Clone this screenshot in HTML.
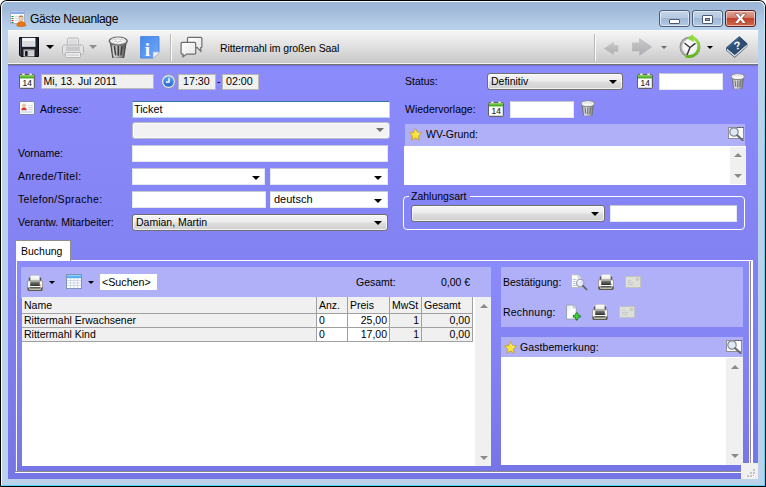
<!DOCTYPE html>
<html lang="de">
<head>
<meta charset="utf-8">
<title>Gäste Neuanlage</title>
<style>
html,body{margin:0;padding:0;background:#fff;}
body{width:766px;height:487px;position:relative;overflow:hidden;font-family:"Liberation Sans",sans-serif;font-size:10.5px;color:#000;}
.abs,.abs *{position:absolute;box-sizing:border-box;}
#win{left:0;top:0;width:766px;height:487px;border-radius:7px 7px 1px 1px;background:#000;}
#frame{left:1px;top:1px;width:764px;height:485px;border-radius:6px 6px 0 0;background:linear-gradient(#9ab6d6 0px,#9fbad9 8px,#b4cbe6 22px,#b9d2ec 29px,#bcd2ea 30px,#bcd2ea 100%);box-shadow:inset 0 0 0 1px rgba(255,255,255,.92);}
#cyanb{left:1px;top:485px;width:764px;height:1px;background:#4fd6f6;}
#title{left:30px;top:12px;font-size:12px;letter-spacing:-.36px;line-height:15px;white-space:nowrap;}
.cb{top:10px;height:17px;border:1px solid #4d5f78;border-radius:3px;box-shadow:inset 0 0 0 1px rgba(255,255,255,.55);}
#tb{left:8px;top:30px;width:750px;height:35px;background:linear-gradient(#ffffff 0px,#f6f6f6 1px,#f2f2f2 4px,#cacaca 32px,#cacaca 33px,#f2f2f2 33px,#f2f2f2 34px,#73736e 34px);}
#form{left:8px;top:65px;width:750px;height:414px;background:linear-gradient(#7474dc 0px,#7474dc 1px,#8484f2 1px,#8484f2 2px,#8b8bfc 2px,#8787f7 90px,#8383f3 175px,#7d7ded 290px,#7575e5 414px);}
.lbl{white-space:nowrap;line-height:13px;height:13px;}
.inp{background:#fff;border:1px solid #e3e9ef;border-top-color:#c4c8d4;border-radius:1px;}
.ro{background:#f0f0f0;border:1px solid #b8b8b8;white-space:nowrap;line-height:12px;padding-left:2px;}
.cmb{border:1px solid #707070;border-radius:3px;background:linear-gradient(#f4f4f4 0%,#ececec 48%,#dddddd 52%,#d0d0d0 100%);box-shadow:inset 0 0 0 1px rgba(255,255,255,.7);white-space:nowrap;line-height:14px;padding-left:3px;}
.cmbw{background:#fff;border:1px solid #e3e9ef;border-top-color:#c4c8d4;border-radius:1px;white-space:nowrap;line-height:14px;padding-left:3px;}
.arr{width:0;height:0;border-left:4px solid transparent;border-right:4px solid transparent;border-top:4px solid #000;}
.arrs{width:0;height:0;border-left:3px solid transparent;border-right:3px solid transparent;border-top:3px solid #000;}
.lp{background:#b0b0f8;}
.sb{background:#f0f0f0;}
.up{width:0;height:0;border-left:4px solid transparent;border-right:4px solid transparent;border-bottom:4px solid #8a8a8a;}
.dn{width:0;height:0;border-left:4px solid transparent;border-right:4px solid transparent;border-top:4px solid #8a8a8a;}
.cell{border-right:1px solid #a0a0a0;border-bottom:1px solid #a0a0a0;background:#f0f0f0;white-space:nowrap;line-height:13px;padding-left:2px;overflow:hidden;}
.cell.w{background:#fff;}
.cell.r{text-align:right;padding-right:2px;padding-left:0;}
</style>
</head>
<body>
<div class="abs" id="win">
 <div id="frame"></div>
 <div id="cyanb"></div>
 <div style="left:764px;top:6px;width:1px;height:480px;background:linear-gradient(#c8eefa,#50d8f8 30%);"></div>
 <svg style="left:10px;top:10px" width="17" height="17" viewBox="0 0 17 17"><rect x=".5" y=".5" width="14" height="13" fill="#fbfbfd" stroke="#9aa6c8" stroke-width=".8"/><rect x=".9" y=".9" width="13.200" height="3" fill="#7ea4e6"/><rect x=".9" y=".9" width="13.200" height="1.200" fill="#b4ccf2"/><path d="M1.500 6.500h2M1.500 8.500h2M1.500 12.400h2" stroke="#1f8a2a" stroke-width="1.100"/><path d="M1.500 10.500h2" stroke="#e02020" stroke-width="1.100"/><path d="M5 6.500h5M5 8.500h5M5 10.500h4" stroke="#d4d4dc" stroke-width=".9"/><ellipse cx="11.200" cy="8.300" rx="2.100" ry="2.600" fill="#f3d2b0" stroke="#b98a62" stroke-width=".5"/><path d="M9.300 7.200c.3-1.800 3.500-1.800 3.800 0-.9-.8-2.900-.8-3.800 0z" fill="#8a5a2a"/><path d="M6.800 15.800c0-3.400 2.200-4.200 4.400-4.200s4.600.8 4.600 4.200c-1.500 1-7.500 1-9 0z" fill="#e8750e" stroke="#c25a06" stroke-width=".5"/></svg>
 <div id="title">Gäste Neuanlage</div>
 <!-- caption buttons -->
 <div class="cb" style="left:659px;width:31px;background:linear-gradient(#c3d4e8 0%,#b5c9e1 45%,#9fb8d6 50%,#b3c9e2 100%);"><div style="left:9px;top:7.5px;width:11px;height:5px;background:#fff;border:1px solid #4a5a70;border-radius:1px;"></div></div>
 <div class="cb" style="left:692px;width:31px;background:linear-gradient(#c3d4e8 0%,#b5c9e1 45%,#9fb8d6 50%,#b3c9e2 100%);"><div style="left:9px;top:3.5px;width:11px;height:9px;border:1px solid #4a5a70;background:#fff;border-radius:1px;"><div style="left:2px;top:2px;width:5px;height:3px;background:#8da3c0;border:1px solid #4a5a70;"></div></div></div>
 <div class="cb" style="left:725px;width:31px;border-color:#5a2020;background:linear-gradient(#e0a89c 0%,#d07a6a 45%,#c0432e 50%,#cf6a4a 100%);"><svg style="left:6.500px;top:1px" width="16" height="14" viewBox="0 0 16 14"><text x="7.400" y="11" text-anchor="middle" font-family="Liberation Sans,sans-serif" font-weight="bold" font-size="16" fill="#fff" stroke="#4a2020" stroke-width=".7" paint-order="stroke" transform="translate(7.400 0) scale(1.22 1) translate(-7.400 0)">x</text></svg></div>


 <div id="tb">
  <!-- save (floppy) -->
  <svg style="left:11px;top:7px" width="20" height="20" viewBox="0 0 20 20"><path d="M.5.5h19v19H2L.5 18z" fill="#1f1f28" stroke="#0a0a10" stroke-width="1"/><path d="M1.5 1.5v16" stroke="#4a4a58" stroke-width="1"/><rect x="3" y=".8" width="13.5" height="9" fill="#c8dcf4"/><rect x="3.7" y="1" width="12.1" height="8.1" fill="#ffffff"/><rect x="3.7" y="4" width="12.1" height="5.1" fill="#dcdcde"/><rect x="3.7" y="1" width="12.1" height="3" fill="#f4f5f8"/><rect x="4.5" y="12.5" width="11" height="7" fill="#c4c6ca"/><rect x="4.5" y="12.5" width="11" height="1" fill="#8a8c92"/><rect x="6" y="14" width="2.6" height="5" rx=".8" fill="#17171e"/><rect x="9.8" y="14" width="5" height="5" fill="#dddfe2"/><path d="M10 15.5h4.500M10 17h4.5" stroke="#b0b2b8" stroke-width=".6"/></svg>
  <div class="arr" style="left:37.500px;top:15px;"></div>
  <!-- printer disabled -->
  <svg style="left:54px;top:7px" width="22" height="21" viewBox="0 0 22 21"><path d="M5.5 8V2.2c0-.7.5-1.2 1.2-1.2h8.6c.7 0 1.2.5 1.2 1.2V8" fill="#ececee" stroke="#b7b7bb"/><rect x="7" y="2.5" width="8" height="5.5" fill="#dcdcdf"/><path d="M2.5 8h17c1 0 2 1 2 2v6.5c0 .6-.5 1-1 1h-19c-.5 0-1-.4-1-1V10c0-1 1-2 2-2z" fill="#e3e3e6" stroke="#b4b4b8"/><rect x="4" y="9.5" width="14" height="4.5" fill="#c9c9cd"/><path d="M3.5 15.5h15v4c0 .5-.5 1-1 1h-13c-.5 0-1-.5-1-1z" fill="#f0f0f2" stroke="#b4b4b8"/><rect x="5" y="17.5" width="12" height="1" fill="#c4c4c8"/></svg>
  <div class="arr" style="left:81px;top:15px;border-top-color:#8e8e92;"></div>
  <!-- trash -->
  <svg style="left:99.500px;top:5.5px" width="20.500" height="22.500" viewBox="0 0 20 22" preserveAspectRatio="none"><defs><linearGradient id="tg" x1="0" x2="1"><stop offset="0" stop-color="#5a5a5a"/><stop offset=".28" stop-color="#d4d4d4"/><stop offset=".55" stop-color="#a8a8a8"/><stop offset="1" stop-color="#4c4c4c"/></linearGradient></defs><path d="M2.300 6l2.200 14.500c.2.800 1 1.200 1.500 1.200h8c.5 0 1.300-.4 1.500-1.200L17.700 6z" fill="url(#tg)" stroke="#444" stroke-width="1"/><ellipse cx="10" cy="5" rx="8.800" ry="3.900" fill="#dcdcdc" stroke="#6a6a6a" stroke-width="1.400"/><ellipse cx="10" cy="4.300" rx="7" ry="2.900" fill="#fbfbfb"/><path d="M4 4.500l2.200-1.800 1.600 1.400 2.200-2 2 1.700 1.600-1.100 2.200 1.900M5.500 6l2-1 2 1.200 2.500-1.400 2 1.200" stroke="#b4b4b4" stroke-width=".8" fill="none"/><path d="M6.300 9.800l1.100 9M10 9.800v9.400M13.700 9.800l-1.100 9" stroke="#3e3e3e" stroke-width="1.500" fill="none"/><path d="M4.600 9.500l1.200 9.500" stroke="#f0f0f0" stroke-width=".8" fill="none" opacity=".8"/></svg>
  <!-- info -->
  <svg style="left:132px;top:5.5px" width="20" height="23" viewBox="0 0 20 23"><defs><linearGradient id="ig" x1="0" y1="0" x2="1" y2="1"><stop offset="0" stop-color="#4488ee"/><stop offset="1" stop-color="#72aaf8"/></linearGradient></defs><path d="M.6.600h18.400v15.600l-5.600 5.800H.6z" fill="url(#ig)" stroke="#3c7ce0" stroke-width=".8"/><path d="M19 16.200h-5.600V22z" fill="#f6f6f6"/><path d="M13.400 22v-5.800H19" fill="none" stroke="#cfd6e4" stroke-width=".7"/><text x="7.400" y="19.700" text-anchor="middle" font-family="Liberation Serif,serif" font-weight="bold" font-size="19" fill="#fff">i</text></svg>
  <div style="left:162px;top:4px;width:1px;height:27px;background:#b9b9b9;"></div><div style="left:163px;top:4px;width:1px;height:27px;background:#fbfbfb;"></div>
  <!-- chat -->
  <svg style="left:172px;top:5px" width="24" height="24" viewBox="0 0 24 24"><defs><linearGradient id="chg" x1="0" y1="0" x2="1" y2="1"><stop offset="0" stop-color="#ffffff"/><stop offset="1" stop-color="#e4e4e4"/></linearGradient></defs><path d="M8.600 2.400h12.200c.6 0 1.100.5 1.100 1.100v8c0 .6-.5 1.100-1.100 1.100V16.200l-3.500-3.600H8.600c-.6 0-1.100-.5-1.100-1.100v-8c0-.6.500-1.100 1.100-1.100z" fill="url(#chg)" stroke="#6c6c6c" stroke-width="1.200"/><path d="M2.200 7.400h12.400c.6 0 1.100.5 1.100 1.100V18c0 .6-.5 1.100-1.100 1.100H6.700L3 21.800v-2.700h-.8c-.6 0-1.100-.5-1.100-1.100V8.500c0-.6.500-1.100 1.100-1.100z" fill="url(#chg)" stroke="#6c6c6c" stroke-width="1.200"/></svg>
  <div class="lbl" style="left:212px;top:11.500px;font-size:10.5px;letter-spacing:-.11px;">Rittermahl im großen Saal</div>
  <!-- right side -->
  <div style="left:586px;top:4px;width:1px;height:27px;background:#b9b9b9;"></div><div style="left:587px;top:4px;width:1px;height:27px;background:#fbfbfb;"></div>
  <svg style="left:596px;top:11.500px" width="15" height="13" viewBox="0 0 15 13"><defs><linearGradient id="ag" x1="0" y1="0" x2="0" y2="1"><stop offset="0" stop-color="#c8c8ca"/><stop offset="1" stop-color="#aeaeb2"/></linearGradient></defs><path d="M9.500.6v3h4.400v5.800H9.500v3L.4 6.500z" fill="url(#ag)" stroke="#b4b4b8" stroke-width=".5"/></svg>
  <svg style="left:624px;top:7.5px" width="20" height="18" viewBox="0 0 20 18"><path d="M7.500.5v4.400H.3v8.200h7.200v4.400l12.200-8.500z" fill="url(#ag)" stroke="#b4b4b8" stroke-width=".5"/></svg>
  <div class="arrs" style="left:652.700px;top:16px;border-top-color:#6e6e72;"></div>
  <!-- clock -->
  <svg style="left:670px;top:4px" width="25" height="25" viewBox="0 0 25 25"><defs><radialGradient id="cg" cx=".45" cy=".4" r=".7"><stop offset="0" stop-color="#ffffff"/><stop offset=".75" stop-color="#f0eef4"/><stop offset="1" stop-color="#c8c8cc"/></radialGradient><linearGradient id="gg" x1="0" y1="0" x2="0" y2="1"><stop offset="0" stop-color="#9be04a"/><stop offset="1" stop-color="#5cb818"/></linearGradient></defs><circle cx="12" cy="13" r="10.5" fill="#8e8e8e"/><circle cx="12" cy="13" r="9.5" fill="#b4b4b4"/><circle cx="12.5" cy="13" r="8.3" fill="url(#cg)"/><path d="M12 13.500L7 9.5M12 13.5l5-3.800M12 13.5l-2.800 7" stroke="#3a3a3a" stroke-width="1.5" fill="none" stroke-linecap="round"/><path d="M14.6 3.4A10 10 0 0 1 8.6 22.400" fill="none" stroke="url(#gg)" stroke-width="2.8" stroke-linecap="round"/><path d="M9 4.600L15 .2l.8 7.800z" fill="#8fd840"/></svg>
  <div class="arrs" style="left:699px;top:16px;"></div>
  <!-- book -->
  <svg style="left:717px;top:6px" width="23" height="22" viewBox="0 0 23 22"><path d="M1.300 11.400L14.300.3 22.300 7.5v3L9.800 21.800 1.300 14.600z" fill="#1b3550"/><path d="M2 12.500l7.800 6.600L21.800 8.600v2L9.800 21 2 14.500z" fill="#eef2f6"/><path d="M2.300 13.700l7.500 6.300L21.600 9.700" stroke="#8fa2b6" stroke-width=".5" fill="none"/><path d="M1.600 11.600L14.300.8 22 7.600 9.800 18.300z" fill="#2d4f73"/><path d="M1.600 11.600L14.300.8l1.200 1L3 12.800z" fill="#3d6188"/><text x="9" y="13.5" font-family="Liberation Sans,sans-serif" font-weight="bold" font-size="11" fill="#fff" transform="rotate(-14 12 10)">?</text></svg>
 </div>
 <div id="form"></div>

 <div id="ctl" style="left:0;top:0;width:766px;height:487px;">
  <!-- row 1 -->
  <svg style="left:19px;top:73px" width="16" height="16" viewBox="0 0 16 16"><rect x=".5" y="1.5" width="15" height="14" rx="1.5" fill="#fff" stroke="#606068"/><path d="M1 2.5a.5.5 0 0 1 .5-.5h13a.5.5 0 0 1 .5.5V5.5H1z" fill="#4fae2c"/><path d="M1 2.5a.5.5 0 0 1 .5-.5h13a.5.5 0 0 1 .5.5V3.5H1z" fill="#86d455"/><rect x="3" y=".3" width="2.8" height="2.2" rx=".5" fill="#f4f4f4" stroke="#7a9a6a" stroke-width=".5"/><rect x="10.2" y=".3" width="2.8" height="2.2" rx=".5" fill="#f4f4f4" stroke="#7a9a6a" stroke-width=".5"/><path d="M14.5 6v8.5H2" stroke="#d8d8d8" stroke-width="1" fill="none"/><text x="8.2" y="13.4" text-anchor="middle" font-family="Liberation Sans,sans-serif" font-size="8.3" fill="#222" stroke="#222" stroke-width=".12">14</text></svg>
  <div class="ro" style="left:41px;top:73.500px;width:113px;height:15px;line-height:12.500px;padding-left:1.500px;">Mi, 13. Jul 2011</div>
  <svg style="left:161px;top:73.5px" width="15" height="15" viewBox="0 0 15 15"><defs><linearGradient id="bl" x1="0" y1="0" x2="0" y2="1"><stop offset="0" stop-color="#62a8f4"/><stop offset="1" stop-color="#2664cc"/></linearGradient></defs><circle cx="7.5" cy="7.5" r="6.9" fill="#eef0f6" stroke="#8a8c9c" stroke-width=".9"/><circle cx="7.5" cy="7.5" r="5.300" fill="url(#bl)"/><path d="M8 3.800V8H5" stroke="#fff" stroke-width="1.400" fill="none"/></svg>
  <div class="ro" style="left:178px;top:73.5px;width:38px;height:16.5px;line-height:12.500px;padding-left:4px;font-size:10.7px;">17:30</div>
  <div class="lbl" style="left:217px;top:75px;">-</div>
  <div class="ro" style="left:222px;top:73.5px;width:37px;height:16.5px;line-height:12.500px;padding-left:3px;font-size:10.7px;">02:00</div>
  <div class="lbl" style="left:405px;top:75px;">Status:</div>
  <div class="cmb" style="left:487px;top:73px;width:136px;height:17px;">Definitiv</div><div class="arr" style="left:609px;top:80px;"></div>
  <svg style="left:637px;top:73px" width="16" height="16" viewBox="0 0 16 16"><rect x=".5" y="1.5" width="15" height="14" rx="1.5" fill="#fff" stroke="#606068"/><path d="M1 2.5a.5.5 0 0 1 .5-.5h13a.5.5 0 0 1 .5.5V5.5H1z" fill="#4fae2c"/><path d="M1 2.5a.5.5 0 0 1 .5-.5h13a.5.5 0 0 1 .5.5V3.5H1z" fill="#86d455"/><rect x="3" y=".3" width="2.8" height="2.2" rx=".5" fill="#f4f4f4" stroke="#7a9a6a" stroke-width=".5"/><rect x="10.2" y=".3" width="2.8" height="2.2" rx=".5" fill="#f4f4f4" stroke="#7a9a6a" stroke-width=".5"/><path d="M14.5 6v8.5H2" stroke="#d8d8d8" stroke-width="1" fill="none"/><text x="8.2" y="13.4" text-anchor="middle" font-family="Liberation Sans,sans-serif" font-size="8.3" fill="#222" stroke="#222" stroke-width=".12">14</text></svg>
  <div class="inp" style="left:659px;top:73px;width:64px;height:17px;"></div>
  <svg style="left:730px;top:72.5px" width="15.500" height="16.500" viewBox="0 0 20 22" preserveAspectRatio="none"><defs><linearGradient id="tg2" x1="0" x2="1"><stop offset="0" stop-color="#8a8a8a"/><stop offset=".3" stop-color="#e4e4e4"/><stop offset=".6" stop-color="#bcbcbc"/><stop offset="1" stop-color="#787878"/></linearGradient></defs><path d="M2.5 6l2 14.5c.2.800 1 1 1.500 1h8c.5 0 1.300-.2 1.500-1l2-14.500z" fill="url(#tg2)" stroke="#6a6a6a" stroke-width="1"/><ellipse cx="10" cy="5" rx="8.6" ry="3.800" fill="#ececec" stroke="#8a8a8a" stroke-width="1.300"/><ellipse cx="10" cy="4.400" rx="6.800" ry="2.600" fill="#fcfcfc"/><path d="M4.500 4.800l2-1.600 1.600 1.400 2-1.800 2 1.600 1.600-1 1.800 1.600" stroke="#bdbdbd" stroke-width=".9" fill="none"/><path d="M6.500 10l1 8.500M10 10v9M13.500 10l-1 8.500" stroke="#6e6e6e" stroke-width="1.300" fill="none"/></svg>
  <!-- row 2 -->
  <svg style="left:19px;top:101px" width="16" height="14" viewBox="0 0 16 14"><rect x=".5" y=".5" width="15" height="13" rx="1.500" fill="#fbfbfd" stroke="#7e86a8"/><circle cx="5" cy="4.600" r="1.700" fill="#f1c7a0" stroke="#d49a6a" stroke-width=".4"/><path d="M2.300 9.300c0-2 1.200-2.700 2.700-2.700s2.700.7 2.700 2.700z" fill="#e03434"/><path d="M9.500 4.500h1M11.500 4.500h2M9.500 6.500h4M9.500 8.500h4" stroke="#b8bcc8" stroke-width=".7"/><path d="M2.500 11h11" stroke="#9ec0ea" stroke-width=".9"/></svg>
  <div class="lbl" style="left:40px;top:103px;">Adresse:</div>
  <div class="inp" style="left:132px;top:101px;width:258px;height:17px;line-height:14px;padding-left:1px;font-size:10.8px;border-color:#b5d9ea;border-top-color:#3572a2;border-left-color:#8fb8d4;">Ticket</div>
  <div class="lbl" style="left:405px;top:103px;">Wiedervorlage:</div>
  <svg style="left:488px;top:101px" width="16" height="16" viewBox="0 0 16 16"><rect x=".5" y="1.5" width="15" height="14" rx="1.5" fill="#fff" stroke="#606068"/><path d="M1 2.5a.5.5 0 0 1 .5-.5h13a.5.5 0 0 1 .5.5V5.5H1z" fill="#4fae2c"/><path d="M1 2.5a.5.5 0 0 1 .5-.5h13a.5.5 0 0 1 .5.5V3.5H1z" fill="#86d455"/><rect x="3" y=".3" width="2.8" height="2.2" rx=".5" fill="#f4f4f4" stroke="#7a9a6a" stroke-width=".5"/><rect x="10.2" y=".3" width="2.8" height="2.2" rx=".5" fill="#f4f4f4" stroke="#7a9a6a" stroke-width=".5"/><path d="M14.5 6v8.5H2" stroke="#d8d8d8" stroke-width="1" fill="none"/><text x="8.2" y="13.4" text-anchor="middle" font-family="Liberation Sans,sans-serif" font-size="8.3" fill="#222" stroke="#222" stroke-width=".12">14</text></svg>
  <div class="inp" style="left:510px;top:101px;width:64px;height:17px;"></div>
  <svg style="left:580px;top:99.5px" width="15.500" height="16.500" viewBox="0 0 20 22" preserveAspectRatio="none"><defs><linearGradient id="tg2" x1="0" x2="1"><stop offset="0" stop-color="#8a8a8a"/><stop offset=".3" stop-color="#e4e4e4"/><stop offset=".6" stop-color="#bcbcbc"/><stop offset="1" stop-color="#787878"/></linearGradient></defs><path d="M2.5 6l2 14.5c.2.800 1 1 1.500 1h8c.5 0 1.300-.2 1.500-1l2-14.500z" fill="url(#tg2)" stroke="#6a6a6a" stroke-width="1"/><ellipse cx="10" cy="5" rx="8.6" ry="3.800" fill="#ececec" stroke="#8a8a8a" stroke-width="1.300"/><ellipse cx="10" cy="4.400" rx="6.800" ry="2.600" fill="#fcfcfc"/><path d="M4.500 4.800l2-1.600 1.600 1.400 2-1.800 2 1.600 1.600-1 1.800 1.600" stroke="#bdbdbd" stroke-width=".9" fill="none"/><path d="M6.500 10l1 8.500M10 10v9M13.500 10l-1 8.500" stroke="#6e6e6e" stroke-width="1.300" fill="none"/></svg>
  <!-- row 3 disabled combo -->
  <div class="cmb" style="left:132px;top:122px;width:257.500px;height:17px;border-color:#bcbcc6;background:#f2f2f2;"></div><div class="arr" style="left:376px;top:128px;border-top-color:#707070;"></div>
  <!-- Vorname -->
  <div class="lbl" style="left:18px;top:147px;">Vorname:</div>
  <div class="inp" style="left:132px;top:145px;width:256px;height:17px;"></div>
  <div class="lbl" style="left:18px;top:170px;letter-spacing:.33px;">Anrede/Titel:</div>
  <div class="cmbw" style="left:132px;top:168px;width:133px;height:17px;"></div><div class="arr" style="left:252px;top:176px;"></div>
  <div class="cmbw" style="left:270px;top:168px;width:118px;height:17px;"></div><div class="arr" style="left:374px;top:176px;"></div>
  <div class="lbl" style="left:18px;top:193px;letter-spacing:.35px;">Telefon/Sprache:</div>
  <div class="inp" style="left:132px;top:191px;width:134px;height:17px;"></div>
  <div class="cmbw" style="left:270px;top:191px;width:118px;height:17px;font-size:11px;">deutsch</div><div class="arr" style="left:374px;top:199px;"></div>
  <div class="lbl" style="left:18px;top:216px;">Verantw. Mitarbeiter:</div>
  <div class="cmb" style="left:132px;top:214px;width:256px;height:17px;">Damian, Martin</div><div class="arr" style="left:374px;top:221px;"></div>
  <!-- WV-Grund -->
  <div class="lp" style="left:405px;top:124px;width:340px;height:22px;"></div>
  <svg style="left:409px;top:128px" width="13" height="13" viewBox="0 0 13 13"><path d="M6.500.6l1.800 3.900 4.200.5-3.100 2.900.8 4.200-3.700-2.100-3.700 2.100.8-4.200L.5 5l4.200-.5z" fill="#f8e43a" stroke="#c49a10" stroke-width=".8" stroke-linejoin="round"/><path d="M6.500 2.500l1.100 2.600 2.600.3-2 1.800" fill="none" stroke="#fff8a8" stroke-width=".8"/></svg>
  <div class="lbl" style="left:426px;top:128px;">WV-Grund:</div>
  <svg style="left:728px;top:126px" width="17" height="15" viewBox="0 0 17 15"><rect x=".5" y="1.500" width="15" height="11" fill="#fdfdfd" stroke="#8c8c9a"/><path d="M9 1.500h6.500" stroke="#555" stroke-width="1" stroke-dasharray="1.500 1"/><circle cx="6" cy="6" r="4.200" fill="#dfe9f6" stroke="#8a8a92" stroke-width="1.200"/><path d="M9.200 9.200l5.500 5" stroke="#6a6a6a" stroke-width="2" stroke-linecap="round"/></svg>
  <div style="left:404px;top:145.5px;width:342px;height:39px;background:#fff;"></div>
  <div class="sb" style="left:729.5px;top:146.5px;width:16px;height:37.500px;"></div>
  <div class="up" style="left:733.5px;top:153px;"></div><div class="dn" style="left:733.5px;top:174px;"></div>
  <!-- Zahlungsart -->
  <div style="left:403px;top:195.5px;width:342px;height:34px;border:1px solid #fff;border-radius:4px;"></div>
  <div class="lbl" style="left:409px;top:190px;padding:0 4px 0 2px;background:#8585f5;">Zahlungsart</div>
  <div class="cmb" style="left:411px;top:205px;width:194px;height:17px;"></div><div class="arr" style="left:591px;top:212px;"></div>
  <div class="inp" style="left:610px;top:205px;width:127px;height:17px;"></div>
 </div>

 <div id="tabs" style="left:0;top:0;width:766px;height:487px;">
  <!-- tab page border -->
  <div style="left:17px;top:261px;width:732px;height:210px;background:linear-gradient(#8b8bfc 0px,#8787f7 45px,#8383f3 88px,#7d7ded 146px,#7575e5 210px);"></div>
  <div style="left:15px;top:260px;width:738px;height:1px;background:#fff;"></div>
  <div style="left:15px;top:261px;width:1px;height:211px;background:#8a8a8a;"></div>
  <div style="left:16px;top:261px;width:1px;height:210px;background:#fff;"></div>
  <div style="left:16px;top:471px;width:735px;height:1px;background:#8a8a8a;"></div>
  <div style="left:15px;top:472px;width:738px;height:1px;background:#fff;"></div>
  <div style="left:749px;top:261px;width:1px;height:210px;background:#f4f4f4;"></div>
  <div style="left:750px;top:261px;width:1px;height:211px;background:#8a8a8a;"></div>
  <div style="left:751px;top:261px;width:2px;height:212px;background:#fff;"></div>
  <!-- tab -->
  <div style="left:15px;top:240px;width:56px;height:21px;background:#fff;border:1px solid #8e8e8e;border-bottom:none;"></div>
  <div class="lbl" style="left:21px;top:245px;">Buchung</div>
  <!-- left light panel -->
  <div class="lp" style="left:21px;top:267px;width:470px;height:31px;"></div>
  <svg style="left:27px;top:274.5px" width="16" height="16" viewBox="0 0 16 16"><defs><linearGradient id="pg" x1="0" y1="0" x2="0" y2="1"><stop offset="0" stop-color="#868886"/><stop offset="1" stop-color="#2c2e2c"/></linearGradient><linearGradient id="pp" x1="0" y1="0" x2="0" y2="1"><stop offset="0" stop-color="#ffffff"/><stop offset="1" stop-color="#e2e2e0"/></linearGradient></defs><rect x="1.800" y="2.600" width="12.400" height="4.500" rx="1" fill="#4e4e4a"/><rect x="3.300" y=".3" width="9.400" height="6.200" fill="url(#pp)" stroke="#b4b4ac" stroke-width=".5"/><rect x=".4" y="5.800" width="15.200" height="7" rx="1.200" fill="#f6f6f4" stroke="#7c7c70" stroke-width=".7"/><rect x="3.200" y="6.400" width="9.600" height="4.600" fill="url(#pg)"/><rect x="13.100" y="9.800" width="1.100" height="1.100" fill="#f0922a"/><path d="M.4 12h15.200v2.800c0 .6-.5 1.100-1.100 1.100h-13c-.6 0-1.100-.5-1.100-1.100z" fill="#5a5a46"/><rect x="1" y="11.600" width="14" height=".9" fill="#fdfdfd"/><rect x="2.200" y="13.200" width="11.600" height="1.500" fill="#e6e6e2"/><rect x="2.800" y="12.400" width="10.400" height="1" fill="#2a2c2a"/></svg>
  <div class="arrs" style="left:48.5px;top:281px;"></div>
  <svg style="left:66px;top:274px" width="16" height="15" viewBox="0 0 16 15"><rect x=".5" y=".5" width="15" height="14" fill="#fdfdfd" stroke="#7f93b4"/><rect x="1" y="1" width="14" height="3.200" fill="#52aef2"/><rect x="1" y="1" width="14" height="1.200" fill="#8fd0fa"/><path d="M1 6.500h14M1 9h14M1 11.500h14M4.500 4.200v10M8 4.200v10M11.500 4.200v10" stroke="#c9d6e4" stroke-width=".9"/></svg>
  <div class="arrs" style="left:87.5px;top:281px;"></div>
  <div style="left:100px;top:274px;width:57px;height:16px;background:#fff;line-height:17px;padding-left:2px;white-space:nowrap;font-size:10.7px;">&lt;Suchen&gt;</div>
  <div class="lbl" style="left:356px;top:276px;">Gesamt:</div>
  <div class="lbl" style="left:441px;top:276px;">0,00 €</div>
  <!-- grid -->
  <div style="left:22px;top:297px;width:469px;height:169px;background:#fff;"></div>
  <div class="sb" style="left:475px;top:297px;width:16px;height:169px;"></div>
  <div class="up" style="left:479.500px;top:304px;"></div><div class="dn" style="left:479.5px;top:456px;"></div>
  <div class="cell" style="left:22px;top:297px;width:295px;height:17px;line-height:17px;">Name</div>
  <div class="cell" style="left:317px;top:297px;width:31px;height:17px;line-height:17px;">Anz.</div>
  <div class="cell" style="left:348px;top:297px;width:42px;height:17px;line-height:17px;">Preis</div>
  <div class="cell" style="left:390px;top:297px;width:32px;height:17px;line-height:17px;">MwSt</div>
  <div class="cell" style="left:422px;top:297px;width:51px;height:17px;line-height:17px;">Gesamt</div>
  <div class="cell" style="left:22px;top:314px;width:295px;height:14px;">Rittermahl Erwachsener</div>
  <div class="cell w" style="left:317px;top:314px;width:31px;height:14px;">0</div>
  <div class="cell w r" style="left:348px;top:314px;width:42px;height:14px;">25,00</div>
  <div class="cell r" style="left:390px;top:314px;width:32px;height:14px;">1</div>
  <div class="cell r" style="left:422px;top:314px;width:51px;height:14px;">0,00</div>
  <div class="cell" style="left:22px;top:328px;width:295px;height:14px;">Rittermahl Kind</div>
  <div class="cell w" style="left:317px;top:328px;width:31px;height:14px;">0</div>
  <div class="cell w r" style="left:348px;top:328px;width:42px;height:14px;">17,00</div>
  <div class="cell r" style="left:390px;top:328px;width:32px;height:14px;">1</div>
  <div class="cell r" style="left:422px;top:328px;width:51px;height:14px;">0,00</div>
  <!-- right panel -->
  <div class="lp" style="left:501px;top:267px;width:241.500px;height:60px;"></div>
  <div class="lbl" style="left:503px;top:276px;">Bestätigung:</div>
  <svg style="left:570px;top:274px" width="18" height="17" viewBox="0 0 18 17"><path d="M1.500.8h6.500l3.300 3.300v9.400H1.500z" fill="#fbfbfb" stroke="#b8b8b4" stroke-width=".8"/><path d="M8 .8v3.300h3.300" fill="#ecece8" stroke="#b8b8b4" stroke-width=".6"/><path d="M3 5.500h3.500M3 7.500h2.500M3 9.500h2.500M3 11.500h4" stroke="#a9c4e4" stroke-width=".9"/><circle cx="10.300" cy="9" r="3.700" fill="#e6eef8" fill-opacity=".8" stroke="#9a9aa2" stroke-width="1.100"/><path d="M8.500 7.500a2.500 2.500 0 0 1 2.500-1" stroke="#fff" stroke-width=".8" fill="none"/><path d="M13 11.800l3.600 3.700" stroke="#5c5c5c" stroke-width="1.700" stroke-linecap="round"/></svg>
  <svg style="left:598px;top:274px" width="16" height="16" viewBox="0 0 16 16"><defs><linearGradient id="pg" x1="0" y1="0" x2="0" y2="1"><stop offset="0" stop-color="#868886"/><stop offset="1" stop-color="#2c2e2c"/></linearGradient><linearGradient id="pp" x1="0" y1="0" x2="0" y2="1"><stop offset="0" stop-color="#ffffff"/><stop offset="1" stop-color="#e2e2e0"/></linearGradient></defs><rect x="1.800" y="2.600" width="12.400" height="4.500" rx="1" fill="#4e4e4a"/><rect x="3.300" y=".3" width="9.400" height="6.200" fill="url(#pp)" stroke="#b4b4ac" stroke-width=".5"/><rect x=".4" y="5.800" width="15.200" height="7" rx="1.200" fill="#f6f6f4" stroke="#7c7c70" stroke-width=".7"/><rect x="3.200" y="6.400" width="9.600" height="4.600" fill="url(#pg)"/><rect x="13.100" y="9.800" width="1.100" height="1.100" fill="#f0922a"/><path d="M.4 12h15.200v2.800c0 .6-.5 1.100-1.100 1.100h-13c-.6 0-1.100-.5-1.100-1.100z" fill="#5a5a46"/><rect x="1" y="11.600" width="14" height=".9" fill="#fdfdfd"/><rect x="2.200" y="13.200" width="11.600" height="1.500" fill="#e6e6e2"/><rect x="2.800" y="12.400" width="10.400" height="1" fill="#2a2c2a"/></svg><svg style="left:625px;top:276px" width="16" height="12" viewBox="0 0 16 12"><rect x=".5" y=".5" width="15" height="11" fill="#dededa" stroke="#c2c2ba" stroke-width=".9"/><rect x="11.500" y="2.200" width="2.200" height="2.200" fill="#d0d0ca" stroke="#bcbcb4" stroke-width=".5"/><path d="M3 4.300h1M4.500 4.300h1.500M3 6.500h2M5.500 6.500h1.500M7.500 6.500h1.500M3 8.700h1.500M5 8.700h2M7.500 8.700h1" stroke="#bcbcb4" stroke-width=".8"/></svg>
  <div class="lbl" style="left:503px;top:305.5px;letter-spacing:.2px;">Rechnung:</div>
  <svg style="left:565px;top:304px" width="16" height="17" viewBox="0 0 16 17"><defs><linearGradient id="dg" x1="0" y1="0" x2="1" y2="1"><stop offset="0" stop-color="#dfe9e9"/><stop offset=".5" stop-color="#ffffff"/><stop offset="1" stop-color="#f4f6f6"/></linearGradient></defs><path d="M1.500 1h6.800l3 3v11H1.500z" fill="url(#dg)" stroke="#8e9aa4" stroke-width=".8"/><path d="M8.300 1v3h3" fill="#e4e8ea" stroke="#8e9aa4" stroke-width=".6"/><path d="M11.800 9.700v5.200M9.200 12.300h5.200" stroke="#1a7f1a" stroke-width="3" stroke-linecap="round"/><path d="M11.800 10.100v4.400M9.600 12.300h4.400" stroke="#3fd23f" stroke-width="1.600" stroke-linecap="round"/></svg>
  <svg style="left:592px;top:304px" width="16" height="16" viewBox="0 0 16 16"><defs><linearGradient id="pg" x1="0" y1="0" x2="0" y2="1"><stop offset="0" stop-color="#868886"/><stop offset="1" stop-color="#2c2e2c"/></linearGradient><linearGradient id="pp" x1="0" y1="0" x2="0" y2="1"><stop offset="0" stop-color="#ffffff"/><stop offset="1" stop-color="#e2e2e0"/></linearGradient></defs><rect x="1.800" y="2.600" width="12.400" height="4.500" rx="1" fill="#4e4e4a"/><rect x="3.300" y=".3" width="9.400" height="6.200" fill="url(#pp)" stroke="#b4b4ac" stroke-width=".5"/><rect x=".4" y="5.800" width="15.200" height="7" rx="1.200" fill="#f6f6f4" stroke="#7c7c70" stroke-width=".7"/><rect x="3.200" y="6.400" width="9.600" height="4.600" fill="url(#pg)"/><rect x="13.100" y="9.800" width="1.100" height="1.100" fill="#f0922a"/><path d="M.4 12h15.200v2.800c0 .6-.5 1.100-1.100 1.100h-13c-.6 0-1.100-.5-1.100-1.100z" fill="#5a5a46"/><rect x="1" y="11.600" width="14" height=".9" fill="#fdfdfd"/><rect x="2.200" y="13.200" width="11.600" height="1.500" fill="#e6e6e2"/><rect x="2.800" y="12.400" width="10.400" height="1" fill="#2a2c2a"/></svg><svg style="left:619px;top:306px" width="16" height="12" viewBox="0 0 16 12"><rect x=".5" y=".5" width="15" height="11" fill="#dededa" stroke="#c2c2ba" stroke-width=".9"/><rect x="11.500" y="2.200" width="2.200" height="2.200" fill="#d0d0ca" stroke="#bcbcb4" stroke-width=".5"/><path d="M3 4.300h1M4.500 4.300h1.500M3 6.500h2M5.500 6.500h1.500M7.500 6.500h1.500M3 8.700h1.500M5 8.700h2M7.500 8.700h1" stroke="#bcbcb4" stroke-width=".8"/></svg>
  <div class="lp" style="left:501px;top:337px;width:242px;height:21px;"></div>
  <svg style="left:503.6px;top:340.500px" width="13" height="13" viewBox="0 0 13 13"><path d="M6.500.6l1.800 3.900 4.200.5-3.100 2.900.8 4.200-3.700-2.100-3.700 2.100.8-4.200L.5 5l4.200-.5z" fill="#f8e43a" stroke="#c49a10" stroke-width=".8" stroke-linejoin="round"/><path d="M6.500 2.500l1.100 2.600 2.600.3-2 1.800" fill="none" stroke="#fff8a8" stroke-width=".8"/></svg>
  <div class="lbl" style="left:520px;top:341px;letter-spacing:.08px;">Gastbemerkung:</div>
  <svg style="left:726px;top:339px" width="17" height="15" viewBox="0 0 17 15"><rect x=".5" y="1.500" width="15" height="11" fill="#fdfdfd" stroke="#8c8c9a"/><path d="M9 1.500h6.500" stroke="#555" stroke-width="1" stroke-dasharray="1.500 1"/><circle cx="6" cy="6" r="4.200" fill="#dfe9f6" stroke="#8a8a92" stroke-width="1.200"/><path d="M9.200 9.200l5.500 5" stroke="#6a6a6a" stroke-width="2" stroke-linecap="round"/></svg>
  <div style="left:501px;top:357.300px;width:242px;height:107.500px;background:#fff;"></div>
  <div class="sb" style="left:726px;top:358px;width:17px;height:107px;"></div>
  <div class="up" style="left:731px;top:365px;"></div><div class="dn" style="left:731px;top:454px;"></div>
  <!-- grip -->
  <div class="sb" style="left:741px;top:463px;width:17px;height:16px;"><div style="left:12px;top:12px;width:2px;height:2px;background:linear-gradient(135deg,#a8a8a8 50%,#fff 50%);box-shadow:-3px 0 #c4c4c4,-6px 0 #c4c4c4,0 -3px #c4c4c4,-3px -3px #c4c4c4,0 -6px #c4c4c4;"></div></div>
 </div>
</div>
</body>
</html>
